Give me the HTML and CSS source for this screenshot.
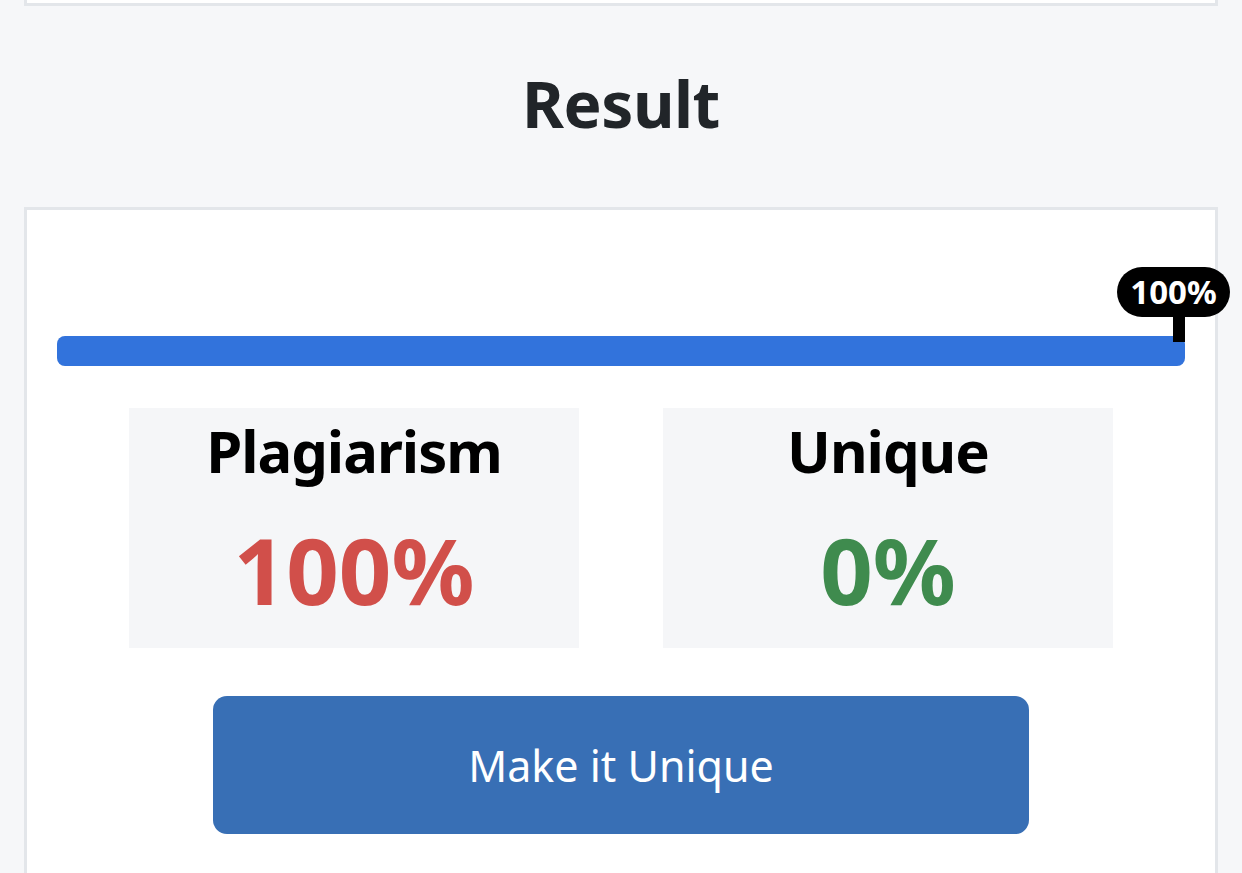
FILE: index.html
```html
<!DOCTYPE html>
<html lang="en">
<head>
<meta charset="utf-8">
<title>Result</title>
<link rel="stylesheet" href="styles.css">
</head>
<body>
<div class="top-card"></div>
<div class="title-wrap"><h1 class="title">Result</h1></div>
<section class="card">
  <div class="progress">
    <div class="progress-fill" style="width:100%"></div>
    <div class="tip">100%</div>
    <div class="tip-stem"></div>
  </div>
  <div class="stats">
    <div class="stat">
      <div class="stat-label">Plagiarism</div>
      <div class="stat-value red">100%</div>
    </div>
    <div class="stat">
      <div class="stat-label">Unique</div>
      <div class="stat-value green">0%</div>
    </div>
  </div>
  <div class="btn-row"><button class="btn">Make it Unique</button></div>
</section>
</body>
</html>
```
FILE: styles.css
```css
html, body {
  margin: 0;
  padding: 0;
  height: 100%;
  overflow: hidden;
}
body {
  background: #f6f7f9;
  font-family: "Noto Sans", "Open Sans", sans-serif;
  color: #212529;
}
.top-card {
  margin: 0 24px;
  height: 3px;
  background: #fff;
  border: 3px solid #e3e6ea;
  border-top: 0;
}
.title-wrap {
  height: 201px;
  display: flex;
  align-items: center;
  justify-content: center;
}
.title {
  margin: 0 0 6px;
  font-size: 64px;
  line-height: 80px;
  letter-spacing: -0.5px;
  font-weight: 700;
  color: #212529;
}
.card {
  margin: 0 24px;
  background: #fff;
  border: 3px solid #e3e6ea;
  border-bottom: 0;
  padding: 126px 30px 0;
  height: 537px;
}
.progress {
  position: relative;
  height: 30px;
  border-radius: 8px;
  background: #e9ecef;
}
.progress-fill {
  height: 100%;
  border-radius: 8px;
  background: #3273dc;
}
.tip {
  position: absolute;
  right: -45px;
  top: -69px;
  width: 113px;
  height: 50px;
  border-radius: 25px;
  background: #000;
  color: #fff;
  font-size: 33px;
  font-weight: 700;
  line-height: 50px;
  text-align: center;
}
.tip-stem {
  position: absolute;
  right: 0;
  top: -19px;
  width: 12px;
  height: 25px;
  background: #000;
}
.stats {
  margin-top: 42px;
  display: flex;
  justify-content: center;
  gap: 84px;
}
.stat {
  width: 450px;
  height: 240px;
  background: #f5f6f8;
  display: flex;
  flex-direction: column;
  align-items: center;
}
.stat-label {
  margin-top: 3px;
  font-size: 58px;
  line-height: 80px;
  letter-spacing: -1px;
  font-weight: 700;
  color: #000;
}
.stat-value {
  margin-top: 29px;
  font-size: 92px;
  line-height: 100px;
  font-weight: 700;
}
.red { color: #d14f4a; }
.green { color: #3f8b4e; }
.btn-row {
  margin-top: 48px;
  display: flex;
  justify-content: center;
}
.btn {
  width: 816px;
  height: 138px;
  border: 0;
  border-radius: 14px;
  background: #386fb5;
  color: #fff;
  font-family: "Noto Sans", "Open Sans", sans-serif;
  font-size: 43px;
  font-weight: 400;
}
```
